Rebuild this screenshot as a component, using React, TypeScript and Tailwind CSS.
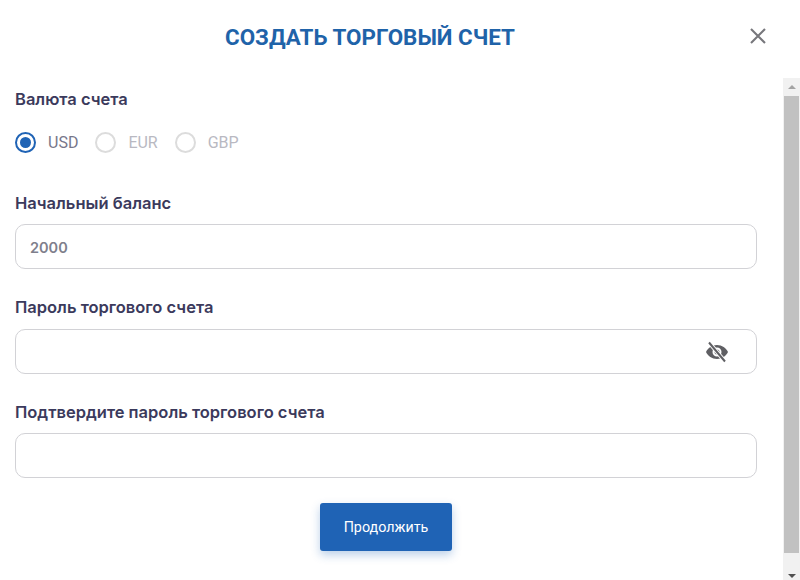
const Label = ({ children, className }: { children: string; className: string }) => (
  <div className={`text-[16.5px] leading-5 font-semibold text-[#3b3a5c] ${className}`}>{children}</div>
);

const Radio = ({ label, active }: { label: string; active?: boolean }) => (
  <div className="flex items-center gap-[12px]">
    <div className={`w-[21px] h-[21px] rounded-full border-2 flex items-center justify-center ${active ? "border-[#1f63b5]" : "border-[#dcdcdc]"}`}>
      {active && <div className="w-[11px] h-[11px] rounded-full bg-[#1f63b5]" />}
    </div>
    <span className={`text-[16px] leading-5 font-['Roboto',sans-serif] ${active ? "text-[#77778a]" : "text-[#b9b9c2]"}`}>{label}</span>
  </div>
);

const Field = ({ value, children }: { value?: string; children?: React.ReactNode }) => (
  <div className="h-[45px] w-[742px] rounded-[10px] border border-[#d2d2d6] bg-white flex items-center justify-between pl-[14px] pr-[27px]">
    <span className="text-[14.5px] pt-[2px] font-semibold text-[#7f7f8c]">{value}</span>
    {children}
  </div>
);

export default function App() {
  return (
    <div className="w-[800px] h-[580px] bg-white overflow-hidden flex flex-col font-['Inter',sans-serif]">
      <header className="h-[78px] shrink-0 flex items-center pb-[6px]">
        <h1 className="w-[740px] mt-[1px] text-center text-[22.4px] leading-7 font-bold text-[#1f63a9] font-['Roboto',sans-serif]">
          СОЗДАТЬ ТОРГОВЫЙ СЧЕТ
        </h1>
        <button className="ml-[9px] text-[#77777c]" aria-label="Закрыть">
          <svg width="18" height="18" viewBox="0 0 18 18" fill="none" stroke="currentColor" strokeWidth="2.1">
            <path d="M2 2 L16 16 M16 2 L2 16" />
          </svg>
        </button>
      </header>
      <div className="flex flex-1 min-h-0">
        <main className="flex-1 flex flex-col pl-[15px] pt-[11px]">
          <Label className="mb-[23px]">Валюта счета</Label>
          <div className="flex gap-[17px] h-[21px] items-center mb-[40px]">
            <Radio label="USD" active />
            <Radio label="EUR" />
            <Radio label="GBP" />
          </div>
          <Label className="mb-[11px]">Начальный баланс</Label>
          <Field value="2000" />
          <Label className="mt-[28px] mb-[12px]">Пароль торгового счета</Label>
          <Field>
            <svg width="24" height="24" viewBox="0 0 24 24" className="text-[#5f5f63]">
              <path fill="currentColor" d="M12 5C7 5 2.900 8.100 1 12c1.900 3.900 6 7 11 7s9.100-3.100 11-7c-1.900-3.900-6-7-11-7zm0 11.500a4.500 4.500 0 1 1 0-9 4.500 4.500 0 0 1 0 9z" />
              <circle cx="12" cy="12" r="2.500" fill="currentColor" />
              <path stroke="#ffffff" strokeWidth="4" d="M4 2.500 L20 21.500" />
              <path stroke="currentColor" strokeWidth="2" d="M4 2.500 L20 21.500" />
            </svg>
          </Field>
          <Label className="mt-[28px] mb-[11px]">Подтвердите пароль торгового счета</Label>
          <Field />
          <div className="w-[742px] mt-[25px] flex justify-center">
            <button className="w-[132px] h-[48px] pt-[2px] rounded-[3px] bg-[#1f63b5] text-white text-[14.3px] font-['Roboto',sans-serif] shadow-[0_4px_10px_rgba(31,99,181,0.3)]">
              Продолжить
            </button>
          </div>
        </main>
        <div className="w-[17px] shrink-0 bg-[#f1f1f1] flex flex-col items-center">
          <div className="h-[18px] flex items-center justify-center">
            <div className="w-0 h-0 border-l-[4px] border-r-[4px] border-b-[4px] border-l-transparent border-r-transparent border-b-[#a3a3a3]" />
          </div>
          <div className="w-[15px] flex-1 bg-[#c1c1c1]" />
          <div className="h-[27px] flex items-end justify-center pb-[2px]">
            <div className="w-0 h-0 border-l-[4px] border-r-[4px] border-t-[4px] border-l-transparent border-r-transparent border-t-[#505050]" />
          </div>
        </div>
      </div>
    </div>
  );
}
